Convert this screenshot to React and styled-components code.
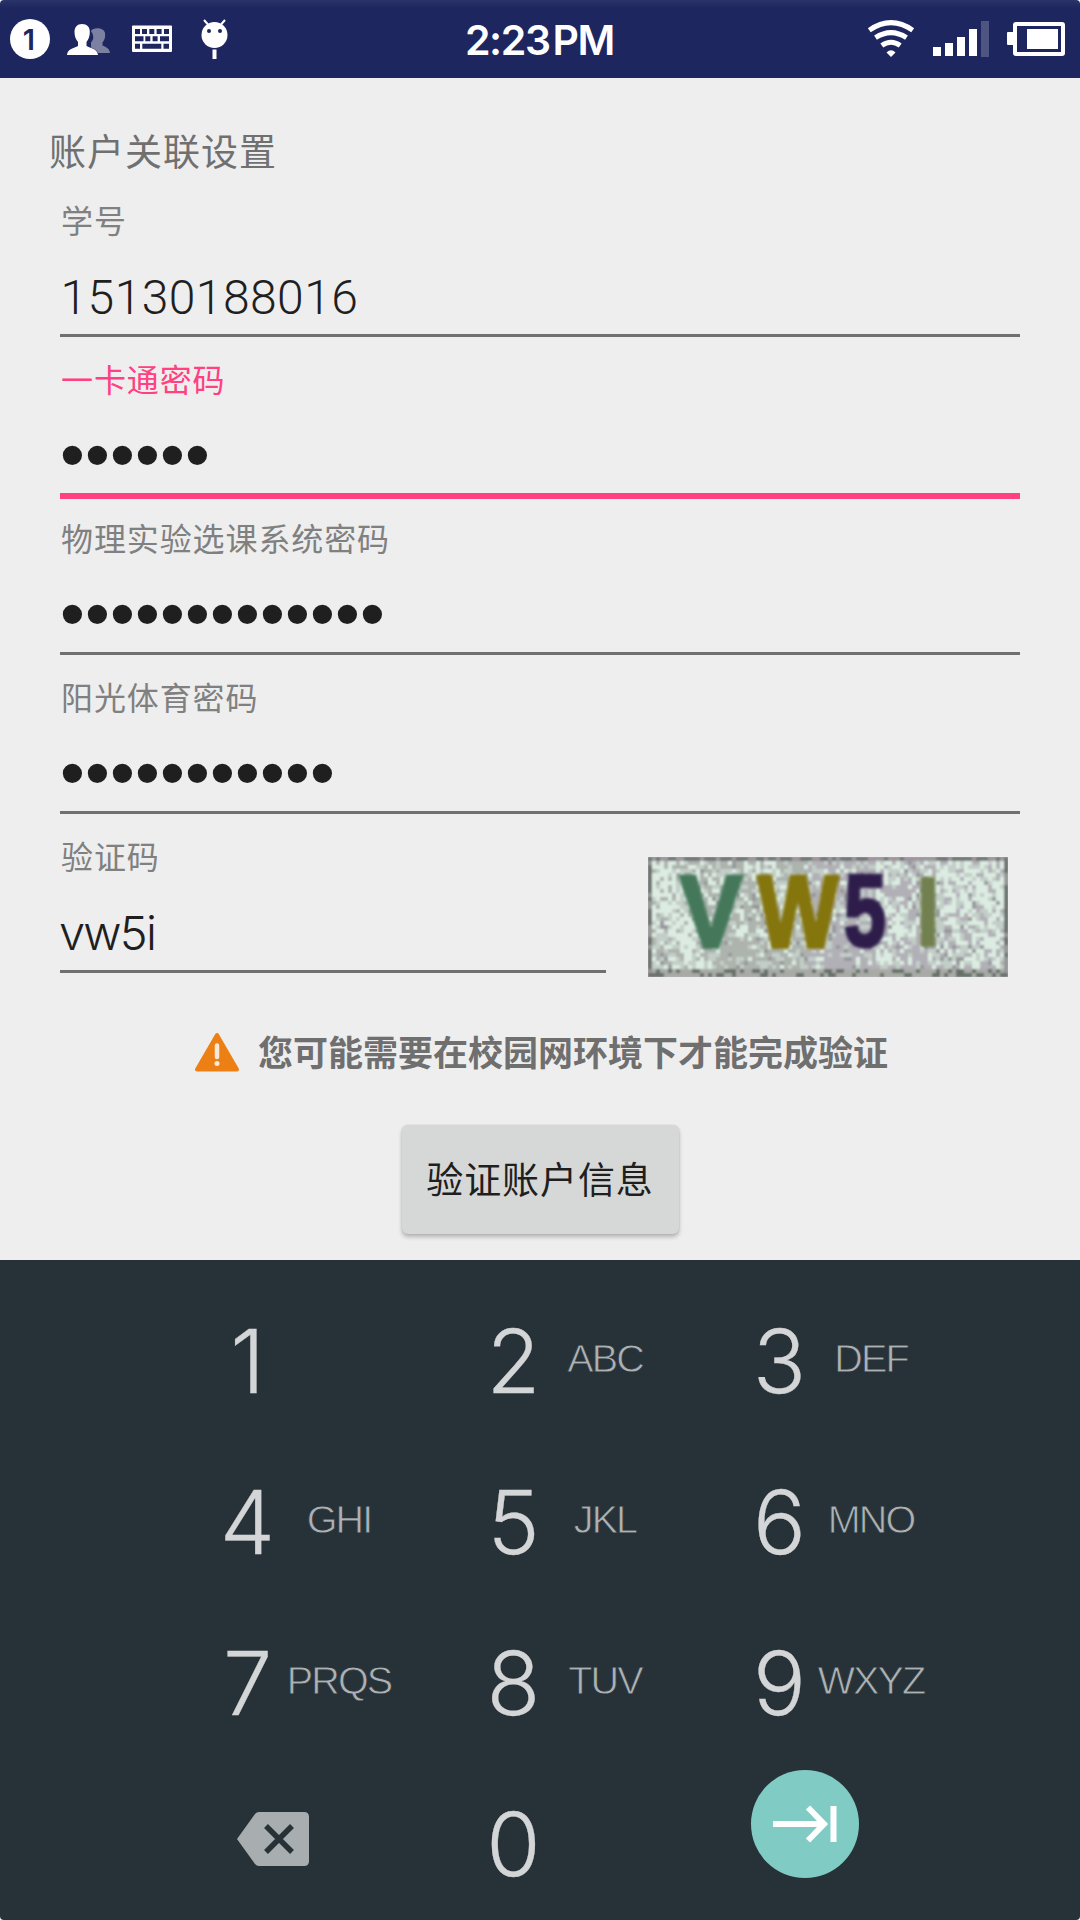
import React from "react";
import styled, { createGlobalStyle } from "styled-components";

const latin = `Inter, "Liberation Sans", "Noto Sans CJK SC", sans-serif`;
const cjk = `"Noto Sans CJK SC", "Noto Sans", sans-serif`;

const GlobalStyle = createGlobalStyle`
  *, *::before, *::after { box-sizing: border-box; }
  body { margin: 0; background: #ffffff; font-family: ${cjk}; }
`;

const Screen = styled.div`
  width: 1080px;
  height: 1920px;
  display: flex;
  flex-direction: column;
  overflow: hidden;
  border-radius: 4px;
`;

const StatusBar = styled.header`
  height: 78px;
  flex: none;
  display: grid;
  grid-template-columns: 1fr auto 1fr;
  background: linear-gradient(#2a3468, #1e265f 8px);
  color: #fff;
`;

const StatusIcons = styled.div`
  display: flex;
  justify-content: ${(p) => (p.$end ? "flex-end" : "flex-start")};
  svg { display: block; }
`;

const Clock = styled.div`
  font: 600 41px/78px ${latin};
  letter-spacing: -1.4px;
  word-spacing: -6px;
  padding: 1px 1px 0 0;
`;

const Form = styled.main`
  height: 1182px;
  flex: none;
  background: #eeeeee;
  padding: 42px 60px 0;
  display: flex;
  flex-direction: column;
`;

const Title = styled.h1`
  margin: 0 0 0 -11px;
  height: 61px;
  font: 400 37px/60px ${cjk};
  letter-spacing: 1px;
  color: #707070;
`;

const Field = styled.div`
  height: 159px;
  width: ${(p) => (p.$short ? "546px" : "auto")};
  display: flex;
  flex-direction: column;
`;

const Label = styled.label`
  height: 69px;
  padding: 14px 0 0 1px;
  font: 400 32px/48px ${cjk};
  letter-spacing: 0.9px;
  color: ${(p) => (p.$active ? "#ff4081" : "#808080")};
`;

const Value = styled.div`
  height: 84px;
  font: 300 47px/94px ${latin};
  letter-spacing: -1.8px;
  text-indent: -1px;
  color: #1f1f1f;
`;

const NumericValue = styled(Value)`
  font: 300 48px/96px Roboto, ${latin};
  letter-spacing: 0.45px;
  text-indent: 0.5px;
`;

const Secret = styled.div`
  height: 84px;
  font: 400 71px/92px "Liberation Sans", Arial, sans-serif;
  letter-spacing: 0.15px;
  color: #1f1f1f;
`;

const Underline = styled.div`
  height: ${(p) => (p.$active ? 6 : 3)}px;
  background: ${(p) => (p.$active ? "#ff4081" : "#707070")};
`;

const CodeRow = styled.div`
  display: flex;
  gap: 42px;
`;

const Captcha = styled.svg`
  display: block;
  width: 360px;
  height: 120px;
  margin-top: 40px;
  overflow: visible;
`;

const Notice = styled.div`
  display: flex;
  align-items: center;
  justify-content: center;
  gap: 18px;
  height: 56px;
  margin-top: 47px;
  padding-left: 2px;
  font: 700 35px/54px ${cjk};
  color: #6f6f6f;
  svg { display: block; }
  span { height: 56px; }
`;

const VerifyButton = styled.button`
  align-self: center;
  width: 277px;
  height: 109px;
  margin-top: 45px;
  border: 0;
  padding: 0 0 3px;
  border-radius: 6px;
  background: #d6d8d7;
  box-shadow: 0 3px 4px rgba(0, 0, 0, 0.24), 0 0 2px rgba(0, 0, 0, 0.12);
  font: 400 37px/106px ${cjk};
  letter-spacing: 0.9px;
  color: #1f1f1f;
`;

const Keypad = styled.section`
  flex: 1;
  background: #263238;
  padding: 19px 0 0 223px;
  display: grid;
  grid-template-columns: repeat(3, 266px);
  grid-auto-rows: 161px;
`;

const Key = styled.div`
  display: grid;
  grid-template-columns: 49px 134px;
  align-items: center;
  justify-items: center;
`;

const Digit = styled.span`
  padding-top: 3px;
  font: 300 88px/100px ${latin};
  -webkit-text-stroke: 0.3px #d4d5d7;
  color: #d4d5d7;
`;

const Letters = styled.span`
  padding-bottom: 3px;
  font: 400 39.5px/46px "Liberation Sans", Arial, sans-serif;
  letter-spacing: -1.9px;
  -webkit-text-stroke: 0.8px #263238;
  color: #adb1b3;
`;

const IconKey = styled.div`
  padding-top: ${(p) => p.$top}px;
  margin-left: ${(p) => p.$left}px;
  svg { display: block; }
`;

const LeftIcons = () => (
  <svg width="240" height="78" viewBox="0 0 240 78">
    <circle cx="30" cy="39" r="20" fill="#fff" />
    <text x="29" y="49.5" textAnchor="middle" fill="#1e265f" fontFamily="Inter, sans-serif" fontWeight="600" fontSize="29">1</text>
    <g fill="#fff" fillOpacity=".42">
      <path d="M91 31c2-4 13-4 14 2 .6 4-.3 7-2.500 9.500v3c3 1.500 7 2.500 7.500 7.500H98c-1-3-4-4-7-5.500v-5c3-3 3-7 0-11.500z" />
    </g>
    <path fill="#fff" d="M82 24c5 0 8 3 7.800 8 0 4-1 7-3.300 10v4c4 2 11 3 11.500 9H67c.4-6 7-7 11-9v-4c-2.400-3-3.500-6-3.500-10 0-5 2.700-8 7.500-8z" />
    <rect x="132" y="25.500" width="40" height="26.500" rx="1" fill="#fff" />
    <path fill="#1e265f" d="M135 29h5v5h-5zM142 29h5v5h-5zM149.300 29h5v5h-5zM156.600 29h5v5h-5zM164 29h5v5h-5zM135 36.200h8.500v5H135zM145.300 36.200h5v5h-5zM152.600 36.200h5v5h-5zM160 36.200h9v5h-9zM135 43.700h5v5h-5zM142.300 43.700h19v5h-19zM163.500 43.700h5.500v5h-5.500z" />
    <ellipse cx="214.500" cy="35" rx="13" ry="13" fill="#fff" />
    <path d="M204 20l4 4.500M225 20l-4 4.500" stroke="#fff" strokeWidth="2" />
    <circle cx="209" cy="31" r="2" fill="#1e265f" />
    <circle cx="220" cy="31" r="2" fill="#1e265f" />
    <rect x="212.500" y="49.500" width="4" height="9.500" fill="#fff" />
  </svg>
);

const RightIcons = () => (
  <svg width="220" height="78" viewBox="860 0 220 78">
    <g fill="none" stroke="#fff" strokeWidth="5">
      <path d="M869.300 30.200Q891 15 912.700 30.200" />
      <path d="M875.500 37.700Q891 27.500 906.500 37.700" />
      <path d="M881.800 45.500Q891 39 900.200 45.500" />
    </g>
    <path fill="#fff" d="M886.500 52.500q4.500-4.500 9 0L891 57z" />
    <g fill="#fff">
      <rect x="933" y="47" width="8" height="9" />
      <rect x="945" y="43" width="8" height="13" />
      <rect x="957" y="37" width="8" height="19" />
      <rect x="969" y="29" width="8" height="27" />
      <rect x="981" y="21" width="8" height="36" fillOpacity=".22" />
      <rect x="1007" y="32" width="8" height="13" rx="1" />
      <rect x="1027" y="29" width="31" height="20" />
    </g>
    <rect x="1015" y="24" width="48" height="30" rx="1" fill="none" stroke="#fff" strokeWidth="4" />
  </svg>
);

// Seeded noise so the captcha speckle is the same on every render.
// Light streaks gather at both ends; the middle and the lower band stay grey.
const speckle = (() => {
  let seed = 1337;
  const rnd = () => (seed = (seed * 16807) % 2147483647) / 2147483647;
  const streak = Array.from({ length: 160 }, rnd);
  const cells = [];
  for (let y = 0; y < 30; y++) {
    for (let x = 0; x < 90; x++) {
      const diagonal = streak[(x + Math.floor((30 - y) / 2)) % 160];
      const r = rnd() * 0.6 + diagonal * 0.4;
      let light = 0.3;
      if (x < 14 || (x > 56 && x < 64) || x > 69) light = 0.46;
      if (x > 18 && x < 28 && y > 19) light = 0.2;
      if (y > 22) light -= 0.06;
      let c;
      if (y === 0) c = r < 0.55 ? "#6f7474" : "#9c969c";
      else if (x === 0 || x === 89) c = r < 0.55 ? "#6a706d" : "#949896";
      else if (y > 27) c = r < 0.42 ? "#667069" : "#a8aaa6";
      else if (r < light) c = "#dcece2";
      else if (r < light + 0.16) c = "#c2cec7";
      else if (r > 0.82) c = "#96999c";
      else c = x < 40 ? "#adb3ad" : "#b2b0b7";
      cells.push({ x: x * 4, y: y * 4, c });
    }
  }
  return cells;
})();

const CaptchaImage = () => (
  <Captcha viewBox="0 0 360 120">
    <defs>
      <filter id="soft" x="0" y="0" width="100%" height="100%"><feGaussianBlur stdDeviation="1.300" /></filter>
      <filter id="glyph" x="-20%" y="-20%" width="140%" height="140%"><feGaussianBlur stdDeviation="1.500" /></filter>
    </defs>
    <rect width="360" height="120" fill="#b2b6b4" />
    <g filter="url(#soft)">
      {speckle.map((s) => (
        <rect key={`${s.x}-${s.y}`} x={s.x} y={s.y} width="4" height="4" fill={s.c} />
      ))}
    </g>
    <g filter="url(#glyph)" fontFamily="'Liberation Sans Narrow', 'Liberation Sans', sans-serif" fontWeight="700" fontSize="102" strokeWidth="4">
      <text x="32" y="90" textLength="62" lengthAdjust="spacingAndGlyphs" fill="#44785a" stroke="#44785a">V</text>
      <text x="110" y="90" textLength="80" lengthAdjust="spacingAndGlyphs" fill="#85750f" stroke="#85750f">W</text>
      <text x="196" y="89" textLength="42" lengthAdjust="spacingAndGlyphs" fill="#2f1f4c" stroke="#2f1f4c">5</text>
      <text x="266" y="90" textLength="28" lengthAdjust="spacingAndGlyphs" fill="#728050">I</text>
    </g>
  </Captcha>
);

const WarningIcon = () => (
  <svg width="46" height="40" viewBox="0 0 46 40">
    <path d="M23 3L43 37.500H3z" fill="#ec8014" stroke="#ec8014" strokeWidth="4" strokeLinejoin="round" />
    <path d="M23 13.500V25" stroke="#f7ead9" strokeWidth="4.500" strokeLinecap="round" />
    <circle cx="23" cy="31.500" r="2.500" fill="#f7ead9" />
  </svg>
);

const BackspaceIcon = () => (
  <svg width="72" height="54" viewBox="0 0 72 54">
    <path d="M18 2Q19.500 0 22 0H67Q72 0 72 5V49Q72 54 67 54H22Q19.500 54 18 52L0 27z" fill="#a8adaf" />
    <path d="M29 14L55 40M55 14L29 40" stroke="#263238" strokeWidth="5.500" />
  </svg>
);

const NextIcon = () => (
  <svg width="108" height="108" viewBox="0 0 108 108">
    <circle cx="54" cy="54" r="54" fill="#80cbc4" />
    <path d="M22 54H72M57 37.500L73 54L57 70.500M82.500 36V72" fill="none" stroke="#fff" strokeWidth="6" />
  </svg>
);

const fields = [
  { label: "学号", value: "15130188016" },
  { label: "一卡通密码", secret: 6, active: true },
  { label: "物理实验选课系统密码", secret: 13 },
  { label: "阳光体育密码", secret: 11 },
];

const keys = [
  ["1", ""], ["2", "ABC"], ["3", "DEF"],
  ["4", "GHI"], ["5", "JKL"], ["6", "MNO"],
  ["7", "PRQS"], ["8", "TUV"], ["9", "WXYZ"],
];

export default function App() {
  return (
    <Screen>
      <GlobalStyle />
      <StatusBar>
        <StatusIcons><LeftIcons /></StatusIcons>
        <Clock>2:23 PM</Clock>
        <StatusIcons $end><RightIcons /></StatusIcons>
      </StatusBar>
      <Form>
        <Title>账户关联设置</Title>
        {fields.map((f) => (
          <Field key={f.label}>
            <Label $active={f.active}>{f.label}</Label>
            {f.secret ? <Secret>{"•".repeat(f.secret)}</Secret> : <NumericValue>{f.value}</NumericValue>}
            <Underline $active={f.active} />
          </Field>
        ))}
        <CodeRow>
          <Field $short>
            <Label>验证码</Label>
            <Value>vw5i</Value>
            <Underline />
          </Field>
          <CaptchaImage />
        </CodeRow>
        <Notice>
          <WarningIcon />
          <span>您可能需要在校园网环境下才能完成验证</span>
        </Notice>
        <VerifyButton>验证账户信息</VerifyButton>
      </Form>
      <Keypad>
        {keys.map(([digit, letters]) => (
          <Key key={digit}>
            <Digit>{digit}</Digit>
            <Letters>{letters}</Letters>
          </Key>
        ))}
        <IconKey $top={50} $left={14}><BackspaceIcon /></IconKey>
        <Key><Digit>0</Digit></Key>
        <IconKey $top={8} $left={-4}><NextIcon /></IconKey>
      </Keypad>
    </Screen>
  );
}
